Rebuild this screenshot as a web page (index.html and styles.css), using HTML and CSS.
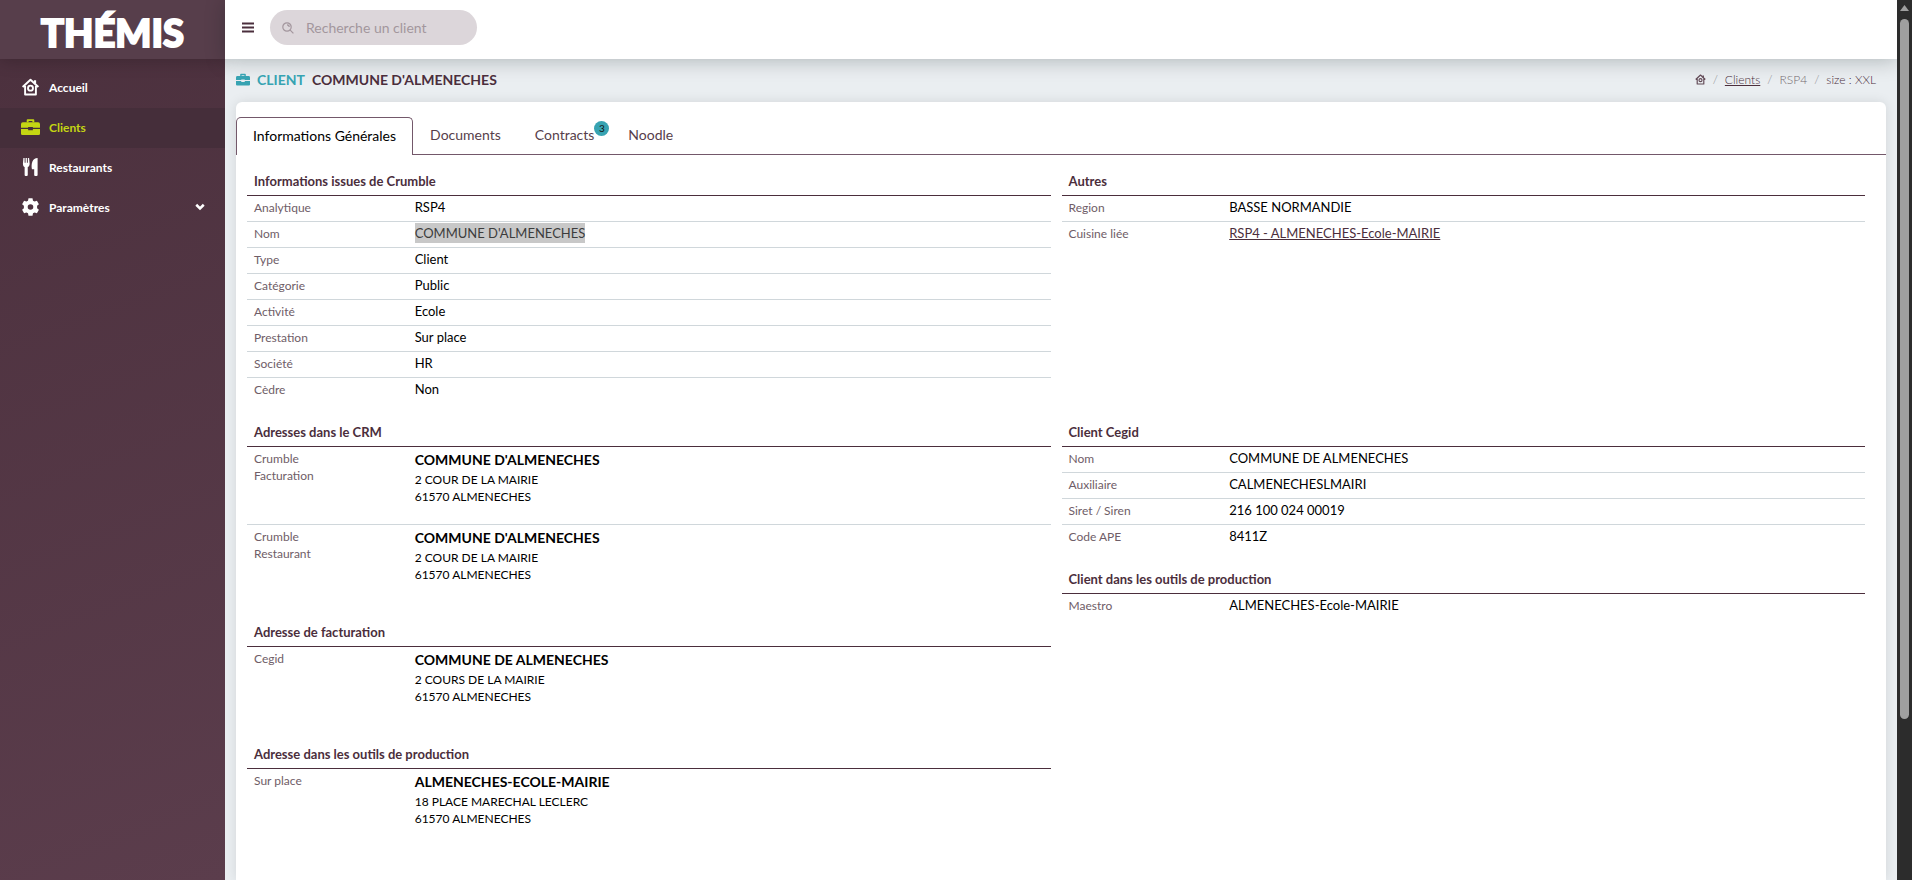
FILE: index.html
```html
<!DOCTYPE html>
<html lang="fr">
<head>
    <meta charset="UTF-8">
    <meta name="viewport" content="width=device-width, initial-scale=1.0">
    <title>Thémis - Client</title>
    <link rel="stylesheet" href="styles.css">
</head>
<body>

<!-- Icônes -->
<svg class="sprite" aria-hidden="true">
    <symbol id="icon-home" viewBox="0 0 16 16">
        <path d="M1 8 8 1.500l7 6.500M3.200 7v7.600h9.600V7" fill="none" stroke="currentColor" stroke-width="1.700" stroke-linejoin="round"/>
        <path d="M11 2h2v3h-2z" fill="currentColor"/>
        <circle cx="8" cy="9" r="2.200" fill="none" stroke="currentColor" stroke-width="1.700"/>
    </symbol>
    <symbol id="icon-case" viewBox="0 0 20 18">
        <path d="M7 4V1.800h6V4" fill="none" stroke="currentColor" stroke-width="2" stroke-linejoin="round"/>
        <path d="M2 4h16a2 2 0 0 1 2 2v3.800h-7.500V9h-5v.8H0V6a2 2 0 0 1 2-2zM0 11h7.500v1.500h5V11H20v5a1.500 1.500 0 0 1-1.500 1.500h-17A1.500 1.500 0 0 1 0 16z" fill="currentColor"/>
    </symbol>
    <symbol id="icon-fork" viewBox="0 0 16 19">
        <path d="M.5 0h1.300v5h1V0h1.400v5h1V0h1.300l.6 6c0 2-1 3-2 3.600V18c0 .6-.4 1-1 1H2.800c-.6 0-1-.4-1-1V9.600C.8 9 0 8 0 6zM15.500 0v18c0 .6-.4 1-1 1h-1.600c-.6 0-1-.4-1-1v-6H9.500C8.500 6 10 0 15.500 0z" fill="currentColor"/>
    </symbol>
    <symbol id="icon-gear" viewBox="0 0 18 18">
        <path fill-rule="evenodd" fill="currentColor" d="M7 .3h4l.5 2.400 1.600.9 2.300-.8 2 3.400-1.800 1.600v2.400l1.800 1.600-2 3.400-2.300-.8-1.600.9-.5 2.400H7l-.5-2.400-1.600-.9-2.300.8-2-3.400 1.800-1.600V7.800L.6 6.200l2-3.400 2.300.8 1.600-.9zM9 6.200a2.800 2.800 0 1 0 0 5.600 2.800 2.800 0 0 0 0-5.600z"/>
    </symbol>
    <symbol id="icon-search" viewBox="0 0 12 12">
        <circle cx="5" cy="5" r="4.200" fill="none" stroke="currentColor" stroke-width="1.200"/>
        <path d="M8.200 8.200 11.400 11.400M5 2.800A2.200 2.200 0 0 1 7.200 5" fill="none" stroke="currentColor" stroke-width="1.200"/>
    </symbol>
</svg>

<div class="app">
    <!-- Menu de gauche -->
    <aside class="sidebar">
        <a class="logo" href="#">THÉMIS</a>
        <nav class="menu">
            <a class="menu-item" href="#"><svg class="menu-icon"><use href="#icon-home"/></svg>Accueil</a>
            <a class="menu-item active" href="#"><svg class="menu-icon"><use href="#icon-case"/></svg>Clients</a>
            <a class="menu-item" href="#"><svg class="menu-icon"><use href="#icon-fork"/></svg>Restaurants</a>
            <a class="menu-item" href="#"><svg class="menu-icon"><use href="#icon-gear"/></svg>Paramètres
                <svg class="chevron" viewBox="0 0 8 6"><path d="M1 1.200l3 3 3-3" fill="none" stroke="currentColor" stroke-width="2"/></svg>
            </a>
        </nav>
    </aside>

    <div class="page">
        <header class="topbar">
            <button class="burger" type="button" aria-label="Menu">
                <svg viewBox="0 0 12 11"><path d="M0 1.500h12M0 5.500h12M0 9.500h12" stroke="currentColor" stroke-width="2"/></svg>
            </button>
            <label class="search">
                <svg><use href="#icon-search"/></svg>
                <input type="text" placeholder="Recherche un client" aria-label="Recherche un client">
            </label>
        </header>

        <main class="content">
            <div class="title-bar">
                <h1><svg><use href="#icon-case"/></svg><span>CLIENT</span>COMMUNE D'ALMENECHES</h1>
                <nav class="breadcrumb">
                    <a href="#" aria-label="Accueil"><svg><use href="#icon-home"/></svg></a>
                    <i>/</i>
                    <a href="#">Clients</a>
                    <i>/</i>
                    <span class="muted">RSP4</span>
                    <i>/</i>
                    <span>size : XXL</span>
                </nav>
            </div>

            <div class="card">
                <div class="tabs" role="tablist">
                    <button class="tab active" type="button" role="tab" aria-selected="true">Informations Générales</button>
                    <button class="tab" type="button" role="tab">Documents</button>
                    <button class="tab" type="button" role="tab">Contracts<span class="badge">3</span></button>
                    <button class="tab" type="button" role="tab">Noodle</button>
                </div>

                <div class="infos">
                    <div class="column">
                        <table>
                            <caption>Informations issues de Crumble</caption>
                            <tr><th scope="row">Analytique</th><td>RSP4</td></tr>
                            <tr><th scope="row">Nom</th><td><mark>COMMUNE D'ALMENECHES</mark></td></tr>
                            <tr><th scope="row">Type</th><td>Client</td></tr>
                            <tr><th scope="row">Catégorie</th><td>Public</td></tr>
                            <tr><th scope="row">Activité</th><td>Ecole</td></tr>
                            <tr><th scope="row">Prestation</th><td>Sur place</td></tr>
                            <tr><th scope="row">Société</th><td>HR</td></tr>
                            <tr><th scope="row">Cèdre</th><td>Non</td></tr>
                        </table>
                    </div>

                    <div class="column">
                        <table>
                            <caption>Autres</caption>
                            <tr><th scope="row">Region</th><td>BASSE NORMANDIE</td></tr>
                            <tr><th scope="row">Cuisine liée</th><td><a href="#">RSP4 - ALMENECHES-Ecole-MAIRIE</a></td></tr>
                        </table>
                    </div>

                    <!-- Adresses -->
                    <div class="column">
                        <table class="addresses">
                            <caption>Adresses dans le CRM</caption>
                            <tr>
                                <th scope="row">Crumble<br>Facturation</th>
                                <td><strong>COMMUNE D'ALMENECHES</strong>2 COUR DE LA MAIRIE<br>61570 ALMENECHES</td>
                            </tr>
                            <tr>
                                <th scope="row">Crumble<br>Restaurant</th>
                                <td><strong>COMMUNE D'ALMENECHES</strong>2 COUR DE LA MAIRIE<br>61570 ALMENECHES</td>
                            </tr>
                        </table>
                        <table class="addresses">
                            <caption>Adresse de facturation</caption>
                            <tr>
                                <th scope="row">Cegid</th>
                                <td><strong>COMMUNE DE ALMENECHES</strong>2 COURS DE LA MAIRIE<br>61570 ALMENECHES</td>
                            </tr>
                        </table>
                        <table class="addresses">
                            <caption>Adresse dans les outils de production</caption>
                            <tr>
                                <th scope="row">Sur place</th>
                                <td><strong>ALMENECHES-ECOLE-MAIRIE</strong>18 PLACE MARECHAL LECLERC<br>61570 ALMENECHES</td>
                            </tr>
                        </table>
                    </div>

                    <div class="column">
                        <table>
                            <caption>Client Cegid</caption>
                            <tr><th scope="row">Nom</th><td>COMMUNE DE ALMENECHES</td></tr>
                            <tr><th scope="row">Auxiliaire</th><td>CALMENECHESLMAIRI</td></tr>
                            <tr><th scope="row">Siret / Siren</th><td>216 100 024 00019</td></tr>
                            <tr><th scope="row">Code APE</th><td>8411Z</td></tr>
                        </table>
                        <table>
                            <caption>Client dans les outils de production</caption>
                            <tr><th scope="row">Maestro</th><td>ALMENECHES-Ecole-MAIRIE</td></tr>
                        </table>
                    </div>
                </div>
            </div>
        </main>
    </div>

    <div class="scrollbar" aria-hidden="true">
        <svg viewBox="0 0 9 6"><path d="M4.500 0 9 6H0z" fill="#9f9f9f"/></svg>
        <div class="thumb"></div>
    </div>
</div>

</body>
</html>
```

FILE: styles.css
```css
* {
    box-sizing: border-box;
}

body {
    margin: 0;
    font-family: Lato, sans-serif;
    font-size: 13px;
    color: #4b2e3c;
    background: #eaeef1;
}

a {
    color: inherit;
}

button,
input {
    font-family: inherit;
}

.sprite {
    display: none;
}

.app {
    display: flex;
    height: 100vh;
    overflow: hidden;
}

/* Menu de gauche */
.sidebar {
    flex: 0 0 225px;
    background: linear-gradient(160deg, #4b303d, #5b3d4c);
    color: #fff;
}

.logo {
    display: flex;
    align-items: center;
    justify-content: center;
    height: 59px;
    padding-top: 4px;
    background: #573e4b;
    box-shadow: 0 2px 16px rgba(0, 0, 0, 0.2);
    color: #fff;
    font-size: 38px;
    font-weight: 900;
    line-height: 1;
    text-decoration: none;
    -webkit-text-stroke: 2px #fff;
}

.menu {
    padding-top: 9px;
}

.menu-item {
    display: flex;
    align-items: center;
    gap: 9px;
    height: 40px;
    padding: 0 20px 2px 21px;
    color: #fff;
    font-size: 12px;
    font-weight: bold;
    text-decoration: none;
}

.menu-item.active {
    background: #452e3a;
    color: #c4d613;
}

.menu-icon {
    width: 19px;
    height: 18px;
}

.chevron {
    width: 10px;
    height: 8px;
    margin-left: auto;
}

/* Barre du haut */
.page {
    flex: 1;
    min-width: 0;
    display: flex;
    flex-direction: column;
}

.topbar {
    flex: none;
    display: flex;
    align-items: center;
    gap: 16px;
    height: 59px;
    padding: 0 17px 4px;
    background: #fff;
    box-shadow: 0 2px 20px rgba(0, 20, 20, 0.25);
}

.burger {
    padding: 0;
    border: 0;
    background: none;
    color: #4b2e3c;
}

.burger svg {
    display: block;
    width: 12px;
    height: 11px;
}

.search {
    display: flex;
    align-items: center;
    gap: 12px;
    width: 207px;
    height: 35px;
    padding: 0 12px;
    border-radius: 18px;
    background: #dcd6da;
    color: #a3969d;
}

.search svg {
    flex: none;
    width: 12px;
    height: 12px;
}

.search input {
    width: 100%;
    padding: 0;
    border: 0;
    outline: 0;
    background: none;
    font-size: 14px;
}

.search input::placeholder {
    color: #a3969d;
}

/* Titre */
.content {
    flex: 1;
    display: flex;
    flex-direction: column;
    padding: 0 11px;
}

.title-bar {
    display: flex;
    align-items: center;
    justify-content: space-between;
    height: 43px;
    padding: 0 10px 2px 0;
}

h1 {
    display: flex;
    align-items: center;
    gap: 7px;
    margin: 0;
    font-size: 14px;
    font-weight: bold;
}

h1 svg {
    width: 14px;
    height: 13px;
    color: #37a3b2;
}

h1 span {
    color: #37a3b2;
}

.breadcrumb {
    display: flex;
    align-items: center;
    gap: 7px;
    font-size: 12px;
    font-weight: 300;
}

.breadcrumb svg {
    display: block;
    width: 11px;
    height: 11px;
    opacity: 0.85;
}

.breadcrumb i {
    color: #8b8b90;
    font-style: normal;
}

.muted {
    color: #74696f;
}

/* Onglets */
.card {
    flex: 1;
    padding-top: 15px;
    border-radius: 6px 6px 0 0;
    background: #fff;
    box-shadow: 0 0 12px rgba(0, 20, 20, 0.1);
}

.tabs {
    display: flex;
    border-bottom: 1px solid #73586a;
}

.tab {
    position: relative;
    height: 37px;
    padding: 0 16px 3px;
    border: 1px solid transparent;
    border-bottom: 0;
    border-radius: 5px 5px 0 0;
    background: none;
    color: #573e4b;
    font-size: 14px;
}

.tab.active {
    height: 38px;
    margin-bottom: -1px;
    border-color: #73586a;
    background: #fff;
    color: #000;
}

.badge {
    position: absolute;
    top: 3px;
    right: 1px;
    width: 15px;
    height: 15px;
    border-radius: 50%;
    background: #37a3b2;
    color: #111;
    font-size: 10px;
    line-height: 15px;
    text-align: center;
}

/* Informations */
.infos {
    display: grid;
    grid-template-columns: 1fr 1fr;
    column-gap: 11px;
    row-gap: 14px;
    padding: 11px 21px 0 11px;
}

.column {
    display: flex;
    flex-direction: column;
    gap: 14px;
}

table {
    width: 100%;
    border-spacing: 0;
    table-layout: fixed;
}

caption {
    height: 30px;
    padding: 0 7px;
    border-bottom: 1px solid #4b2e3c;
    font-weight: bold;
    line-height: 30px;
    text-align: left;
}

th,
td {
    height: 26px;
    padding: 3px 0 0 7px;
    border-bottom: 1px solid #d0d7db;
    line-height: 17px;
    text-align: left;
    vertical-align: baseline;
}

th {
    width: 20%;
    color: #6f5d67;
    font-size: 12px;
    font-weight: normal;
}

td {
    color: #000;
}

tr:last-child th,
tr:last-child td {
    height: 25px;
    border-bottom: 0;
}

td a {
    color: #4b2e3c;
}

mark {
    padding: 2px 0;
    background: #c8c8c8;
    color: #3c3c3c;
}

.addresses th,
.addresses td {
    height: 78px;
    vertical-align: top;
}

.addresses td {
    padding-top: 4px;
    font-size: 12px;
}

.addresses tr:last-child th,
.addresses tr:last-child td {
    height: 78px;
}

.addresses strong {
    display: block;
    margin-bottom: 3px;
    font-size: 14px;
}

/* Ascenseur */
.scrollbar {
    flex: 0 0 15px;
    display: flex;
    flex-direction: column;
    align-items: center;
    gap: 8px;
    padding-top: 5px;
    background: #2c2c2c;
}

.scrollbar svg {
    width: 9px;
    height: 6px;
}

.thumb {
    width: 9px;
    height: 80%;
    border-radius: 5px;
    background: #9f9f9f;
}
```
